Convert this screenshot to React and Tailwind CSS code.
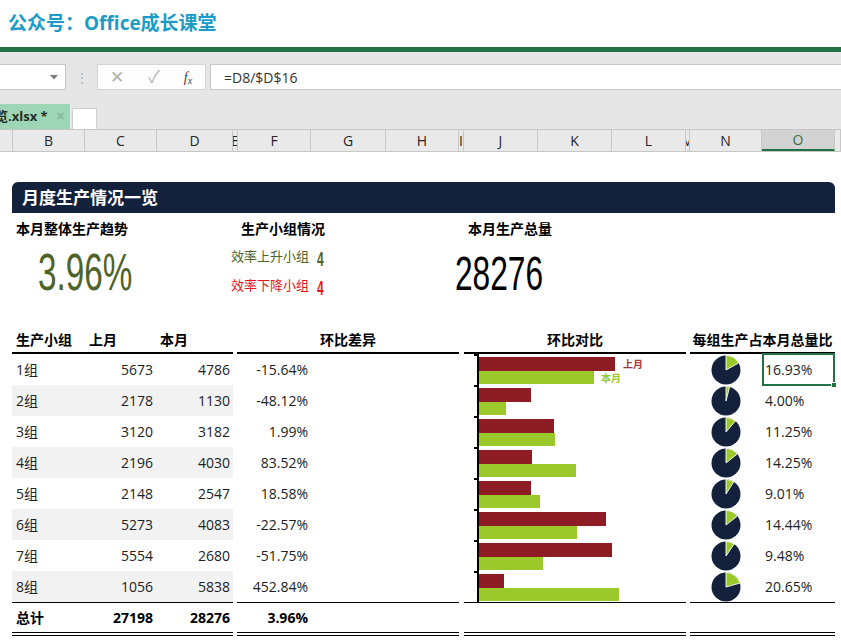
import React from "react";

const COLS = [
  { l: "", w: "w-[13px]" },
  { l: "B", w: "w-[72px]" },
  { l: "C", w: "w-[72px]" },
  { l: "D", w: "w-[76px]" },
  { l: "E", w: "w-[5px]" },
  { l: "F", w: "w-[73px]" },
  { l: "G", w: "w-[75px]" },
  { l: "H", w: "w-[73px]" },
  { l: "I", w: "w-[5px]" },
  { l: "J", w: "w-[74px]" },
  { l: "K", w: "w-[74px]" },
  { l: "L", w: "w-[74px]" },
  { l: "M", w: "w-[4px]" },
  { l: "N", w: "w-[72px]" },
  { l: "O", w: "w-[73px]", active: true },
  { l: "", w: "flex-1" },
];

const ROWS = [
  ["1组", 5673, 4786, "-15.64%", "16.93%"],
  ["2组", 2178, 1130, "-48.12%", "4.00%"],
  ["3组", 3120, 3182, "1.99%", "11.25%"],
  ["4组", 2196, 4030, "83.52%", "14.25%"],
  ["5组", 2148, 2547, "18.58%", "9.01%"],
  ["6组", 5273, 4083, "-22.57%", "14.44%"],
  ["7组", 5554, 2680, "-51.75%", "9.48%"],
  ["8组", 1056, 5838, "452.84%", "20.65%"],
];

const TOTAL = 28276;
const BAR_SCALE = 0.024;

const Pie = ({ share }) => {
  const r = 14.5;
  const a = share * Math.PI * 2;
  const x = 15 + r * Math.sin(a);
  const y = 15 - r * Math.cos(a);
  const large = share > 0.5 ? 1 : 0;
  return (
    <svg width="30" height="30" viewBox="0 0 30 30">
      <circle cx="15" cy="15" r={r} fill="#14213d" />
      <path
        d={`M15 15 L15 ${15 - r} A${r} ${r} 0 ${large} 1 ${x.toFixed(2)} ${y.toFixed(2)} Z`}
        fill="#9bc92b"
        stroke="#fff"
        strokeWidth="0.9"
        strokeLinejoin="round"
      />
    </svg>
  );
};

const DoubleLine = () => (
  <div className="flex flex-col">
    <div className="h-px bg-black" />
    <div className="h-[2px]" />
    <div className="h-px bg-black" />
  </div>
);

export default function App() {
  return (
    <div className="w-[841px] h-[642px] overflow-hidden bg-white font-[Open_Sans,Noto_Sans_CJK_SC,sans-serif] text-[#222]">
      {/* Title */}
      <div className="h-[47px] flex items-center pl-[8px]">
        <span className="text-[19px] font-bold text-[#1b9bc7]">公众号：Office成长课堂</span>
      </div>
      <div className="h-[5px] bg-[#217346]" />

      {/* Formula bar + tabs */}
      <div className="h-[77px] bg-[#e6e6e6] flex flex-col">
        <div className="mt-[12px] h-[26px] flex">
          <div className="w-[66px] h-full bg-white border border-l-0 border-[#c6c6c6] flex items-center justify-end pr-[7px]">
            <svg width="8" height="5" viewBox="0 0 8 5">
              <path d="M0 0 L8 0 L4 4.5 Z" fill="#7a7a7a" />
            </svg>
          </div>
          <div className="w-[31px] flex items-center justify-center text-[#b5b5b5] text-[14px]">⋮</div>
          <div className="w-[109px] h-full bg-[#fdfdfd] border border-[#d4d4d4] flex items-center">
            <span className="w-[38px] text-center text-[17px] text-[#b3b3b3]">✕</span>
            <span className="w-[36px] text-center text-[17px] text-[#b3b3b3]">✓</span>
            <span className="w-[32px] text-center text-[14px] italic font-[Liberation_Serif,serif] text-[#444]">f<sub className="text-[10px]">x</sub></span>
          </div>
          <div className="ml-[4px] flex-1 h-full bg-white border border-r-0 border-[#c6c6c6] flex items-center pl-[13px] text-[14px] text-[#333]">
            =D8/$D$16
          </div>
        </div>
        <div className="mt-[14px] h-[25px] flex items-end">
          <div className="w-[70px] h-full bg-[#9fd5b7] flex items-center overflow-hidden">
            <span className="ml-[-5px] text-[13px] font-bold text-[#1f2f26] whitespace-nowrap">览.xlsx *</span>
            <span className="ml-[8px] text-[11px] font-bold text-[#86b79c]">✕</span>
          </div>
          <div className="ml-[2px] w-[25px] h-[21px] bg-white border border-b-0 border-[#d0d0d0]" />
        </div>
      </div>

      {/* Column headers */}
      <div className="h-[23px] flex bg-[#e9e9e9] border-t border-[#c6c6c6] border-b border-[#ababab]">
        {COLS.map((c, i) => (
          <div
            key={i}
            className={`${c.w} h-full overflow-hidden flex items-center justify-center text-[14px] border-r border-[#c8c8c8] ${
              c.active ? "bg-[#d2d2d2] text-[#3d6b50] border-b-2 border-b-[#217346]" : "text-[#262626]"
            }`}
          >
            {c.l}
          </div>
        ))}
      </div>

      {/* Sheet */}
      <div className="pt-[30px] ml-[12px] w-[823px]">
        <div className="h-[31px] bg-[#14213d] rounded-t-[6px] flex items-center pl-[10px]">
          <span className="text-white text-[17px] font-bold">月度生产情况一览</span>
        </div>

        {/* KPI */}
        <div className="h-[114px] flex">
          <div className="w-[219px] pl-[4px] pt-[6px]">
            <div className="text-[14px] leading-[20px] font-bold text-black">本月整体生产趋势</div>
            <div className="mt-[7px] ml-[22px] text-[52px] leading-[52px] font-[Liberation_Sans,sans-serif] text-[#4f6228] inline-block origin-left scale-x-[0.64]">
              3.96%
            </div>
          </div>
          <div className="w-[224px] pt-[6px]">
            <div className="ml-[10px] text-[14px] leading-[20px] font-bold text-black">生产小组情况</div>
            <div className="mt-[3px] h-[29px] flex items-center">
              <span className="text-[13px] text-[#4f6228]">效率上升小组</span>
              <span className="ml-[8px] text-[20px] leading-[20px] mt-[4px] font-bold font-[Liberation_Sans,sans-serif] text-[#4f6228] inline-block origin-left scale-x-[0.6]">4</span>
            </div>
            <div className="h-[29px] flex items-center">
              <span className="text-[13px] text-[#e8141b]">效率下降小组</span>
              <span className="ml-[8px] text-[20px] leading-[20px] mt-[4px] font-bold font-[Liberation_Sans,sans-serif] text-[#e8141b] inline-block origin-left scale-x-[0.6]">4</span>
            </div>
          </div>
          <div className="flex-1 pt-[6px]">
            <div className="ml-[13px] text-[14px] leading-[20px] font-bold text-black">本月生产总量</div>
            <div className="mt-[11px] text-[48px] leading-[48px] font-[Liberation_Sans,sans-serif] text-black inline-block origin-left scale-x-[0.66]">
              28276
            </div>
          </div>
        </div>

        {/* Table */}
        <div className="flex text-[14px]">
          {/* Section 1 */}
          <div className="w-[221px]">
            <div className="h-[27px] flex items-center border-b-2 border-black font-bold text-black">
              <div className="w-[73px] pl-[4px]">生产小组</div>
              <div className="w-[72px] pl-[4px]">上月</div>
              <div className="w-[76px] pl-[3px]">本月</div>
            </div>
            {ROWS.map((r, i) => (
              <div key={i} className={`h-[31px] flex items-center ${i % 2 === 1 ? "bg-[#f2f2f2]" : ""}`}>
                <div className="w-[73px] pl-[4px]">{r[0]}</div>
                <div className="w-[72px] pr-[4px] text-right">{r[1]}</div>
                <div className="w-[76px] pr-[3px] text-right">{r[2]}</div>
              </div>
            ))}
            <div className="h-[30px] border-t border-black flex items-center font-bold text-black">
              <div className="w-[73px] pl-[4px]">总计</div>
              <div className="w-[72px] pr-[4px] text-right">27198</div>
              <div className="w-[76px] pr-[3px] text-right">28276</div>
            </div>
            <DoubleLine />
          </div>

          {/* Section 2 */}
          <div className="w-[222px] ml-[4px]">
            <div className="h-[27px] flex items-center justify-center border-b-2 border-black font-bold text-black">环比差异</div>
            {ROWS.map((r, i) => (
              <div key={i} className="h-[31px] flex items-center">
                <div className="w-[71px] text-right">{r[3]}</div>
              </div>
            ))}
            <div className="h-[30px] border-t border-black flex items-center font-bold text-black">
              <div className="w-[71px] text-right">3.96%</div>
            </div>
            <DoubleLine />
          </div>

          {/* Section 3 */}
          <div className="w-[222px] ml-[5px]">
            <div className="h-[27px] flex items-center justify-center border-b-2 border-black font-bold text-black">环比对比</div>
            {ROWS.map((r, i) => (
              <div key={i} className="h-[31px] flex items-start">
                <div className="w-[10px]" />
                <div className="w-[3px] h-[2px] bg-black" />
                <div className="w-[2px] h-full bg-black" />
                <div className="flex flex-col pt-[3px]">
                  <div className="flex items-center gap-[8px]">
                    <div className="h-[14px] bg-[#8e1c25]" style={{ width: Math.round(r[1] * BAR_SCALE) }} />
                    {i === 0 && <span className="text-[10px] leading-[10px] font-bold text-[#a23a3a]">上月</span>}
                  </div>
                  <div className="flex items-center gap-[7px]">
                    <div className="h-[13px] bg-[#9bc92b]" style={{ width: Math.round(r[2] * BAR_SCALE) }} />
                    {i === 0 && <span className="text-[10px] leading-[10px] font-bold text-[#9bc92b]">本月</span>}
                  </div>
                </div>
              </div>
            ))}
            <div className="h-[30px] border-t border-black" />
            <DoubleLine />
          </div>

          {/* Section 4 */}
          <div className="w-[145px] ml-[4px]">
            <div className="h-[27px] flex items-center justify-center border-b-2 border-black font-bold text-black whitespace-nowrap">
              每组生产占本月总量比
            </div>
            {ROWS.map((r, i) => (
              <div key={i} className="h-[31px] flex items-center">
                <div className="w-[72px] flex items-center justify-center">
                  <Pie share={r[2] / TOTAL} />
                </div>
                <div className="w-[73px] h-full pl-[3px] flex items-center relative">
                  {r[4]}
                  {i === 0 && (
                    <div className="absolute left-0 right-0 top-[-1px] bottom-[-1px] border-2 border-[#217346]">
                      <div className="absolute right-[-4px] bottom-[-4px] w-[6px] h-[6px] bg-[#217346] border border-white" />
                    </div>
                  )}
                </div>
              </div>
            ))}
            <div className="h-[30px] border-t border-black" />
            <DoubleLine />
          </div>
        </div>
      </div>
    </div>
  );
}
